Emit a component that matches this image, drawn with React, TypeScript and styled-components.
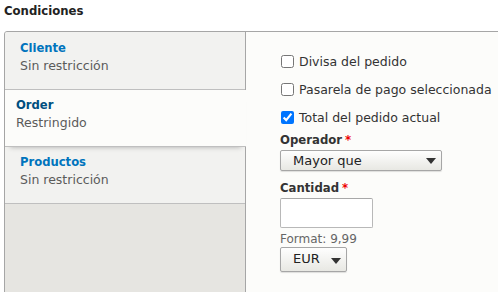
import { type ReactElement } from 'react'
import styled, { createGlobalStyle } from 'styled-components'

const GlobalStyle = createGlobalStyle`
  html, body {
    margin: 0;
    padding: 0;
    overflow: hidden;
    background: #fff;
  }
  body {
    font-family: "DejaVu Sans", Verdana, sans-serif;
    color: #333;
  }
`

const Page = styled.div`
  width: 498px;
  height: 292px;
  overflow: hidden;
  padding: 2px 0 0 4px;
  box-sizing: border-box;
`

const Legend = styled.div`
  font-size: 11.7px;
  font-weight: bold;
  line-height: 18px;
  color: #222;
  margin-bottom: 11px;
`

const Tabs = styled.div`
  display: flex;
  width: 520px;
  height: 300px;
  border: 1px solid #a6a6a6;
  border-radius: 3px 0 0 0;
  background: #fcfcfa;
`

const Menu = styled.ul`
  list-style: none;
  margin: 0;
  padding: 0;
  width: 240px;
  flex-shrink: 0;
  background: #e6e5e1;
  border-right: 1px solid #a6a6a6;
  border-top-left-radius: 3px;
`

const MenuItem = styled.li<{ $selected?: boolean; $first?: boolean }>`
  position: relative;
  height: ${p => (p.$first ? 58 : 57)}px;
  box-sizing: border-box;
  padding: ${p => (p.$first ? 7 : 6)}px 0 0 ${p => (p.$selected ? 11 : 15)}px;
  border-bottom: 1px solid #bfbfbf;
  background: ${p => (p.$selected ? '#fcfcfa' : '#f2f2f0')};
  ${p => p.$first && 'border-top-left-radius: 3px;'}
  ${p =>
    p.$selected &&
    `
    margin-right: -1px;
    z-index: 1;
    box-shadow: 0 5px 5px -5px rgba(0, 0, 0, 0.3);
  `}
`

const ItemTitle = styled.div<{ $selected?: boolean }>`
  font-size: 11.6px;
  font-weight: bold;
  line-height: 18px;
  color: ${p => (p.$selected ? '#004f80' : '#0074bd')};
`

const ItemSummary = styled.div`
  font-size: 12.5px;
  line-height: 18px;
  color: #5b5b5b;
`

const Pane = styled.div`
  flex: 1;
  padding: 20px 0 0 34px;
  background: #fcfcfa;
`

const CheckRow = styled.label`
  display: flex;
  align-items: center;
  gap: 5px;
  height: 18px;
  margin-bottom: 10px;
  font-size: 12.5px;
  color: #333;
`

const Check = styled.input`
  width: 13px;
  height: 13px;
  margin: 0 0 0 1px;
`

const FieldLabel = styled.div<{ $top: number }>`
  font-size: 11.7px;
  font-weight: bold;
  line-height: 18px;
  color: #333;
  margin: ${p => p.$top}px 0 1px;
`

const Required = styled.span`
  color: #e00;
  margin-left: 3px;
`

const Select = styled.div<{ $width: number; $height: number; $lift?: number }>`
  display: flex;
  align-items: center;
  justify-content: space-between;
  box-sizing: border-box;
  width: ${p => p.$width}px;
  height: ${p => p.$height}px;
  padding: 0 5px ${p => p.$lift ?? 0}px 12px;
  border: 1px solid #a6a6a6;
  border-radius: 2px;
  background: linear-gradient(to bottom, #fefefe, #e8e8e3);
  box-shadow: 0 1px 1px rgba(0, 0, 0, 0.12);
  font-size: 13px;
  color: #222;
`

const Arrow = styled.span<{ $drop?: number }>`
  width: 0;
  height: 0;
  border-left: 5px solid transparent;
  border-right: 5px solid transparent;
  border-top: 6px solid #333;
  margin-top: ${p => p.$drop ?? 1}px;
`

const Amount = styled.input`
  display: block;
  box-sizing: border-box;
  width: 93px;
  height: 30px;
  margin: 0;
  border: 1px solid #b8b8b8;
  border-top-color: #a8a8a8;
  border-radius: 2px;
  background: #fff;
`

const Hint = styled.div`
  font-size: 12px;
  line-height: 16px;
  color: #666;
  margin: 3px 0 0;
`

const tabs = [
  { title: 'Cliente', summary: 'Sin restricción' },
  { title: 'Order', summary: 'Restringido', selected: true },
  { title: 'Productos', summary: 'Sin restricción' },
]

function App(): ReactElement {
  return (
    <Page>
      <GlobalStyle />
      <Legend>Condiciones</Legend>
      <Tabs>
        <Menu>
          {tabs.map((t, i) => (
            <MenuItem key={t.title} $selected={t.selected} $first={i === 0}>
              <ItemTitle $selected={t.selected}>{t.title}</ItemTitle>
              <ItemSummary>{t.summary}</ItemSummary>
            </MenuItem>
          ))}
        </Menu>
        <Pane>
          <CheckRow>
            <Check type="checkbox" />
            Divisa del pedido
          </CheckRow>
          <CheckRow>
            <Check type="checkbox" />
            Pasarela de pago seleccionada
          </CheckRow>
          <CheckRow>
            <Check type="checkbox" defaultChecked />
            Total del pedido actual
          </CheckRow>
          <FieldLabel $top={-5}>
            Operador<Required>*</Required>
          </FieldLabel>
          <Select $width={162} $height={21}>
            Mayor que
            <Arrow />
          </Select>
          <FieldLabel $top={8}>
            Cantidad<Required>*</Required>
          </FieldLabel>
          <Amount type="text" />
          <Hint>Format: 9,99</Hint>
          <Select $width={67} $height={25} $lift={3}>
            EUR
            <Arrow $drop={6} />
          </Select>
        </Pane>
      </Tabs>
    </Page>
  )
}

export default App
